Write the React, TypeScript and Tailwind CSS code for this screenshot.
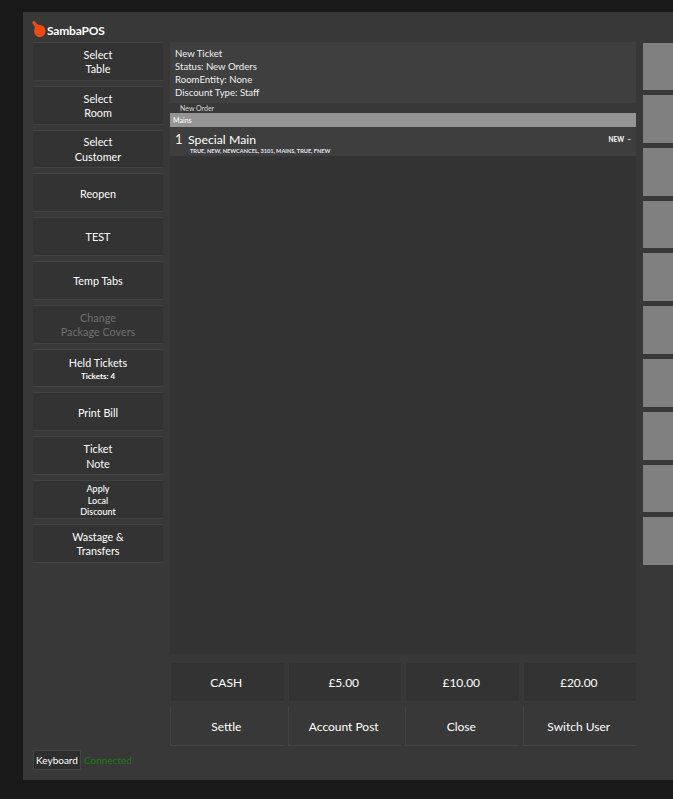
const font = { fontFamily: 'Lato, "Open Sans", sans-serif' };

const sideButtons = [
  { lines: ['Select', 'Table'] },
  { lines: ['Select', 'Room'] },
  { lines: ['Select', 'Customer'] },
  { lines: ['Reopen'] },
  { lines: ['TEST'] },
  { lines: ['Temp Tabs'] },
  { lines: ['Change', 'Package Covers'], disabled: true },
  { lines: ['Held Tickets'], sub: 'Tickets: 4' },
  { lines: ['Print Bill'] },
  { lines: ['Ticket', 'Note'] },
  { lines: ['Apply', 'Local', 'Discount'], small: true },
  { lines: ['Wastage &', 'Transfers'] },
];

const tiles = [47, 48, 48, 47, 48, 48, 48, 48, 47, 48];

function SideButton({ b }: { b: (typeof sideButtons)[number] }) {
  return (
    <div className="h-[38.8px] mb-[5px] pt-[2px] flex flex-col items-center justify-center bg-[#333333] border-t border-b border-[#424242] shrink-0">
      {b.lines.map((l) => (
        <div
          key={l}
          className={
            b.small
              ? 'text-[9px] leading-[11.5px] font-medium text-white'
              : b.disabled
                ? 'text-[10.8px] leading-[14.5px] text-[#707070]'
                : 'text-[10.8px] leading-[14.5px] text-white'
          }
        >
          {l}
        </div>
      ))}
      {b.sub && <div className="text-[8px] leading-[12px] font-bold text-white">{b.sub}</div>}
    </div>
  );
}

export default function App() {
  return (
    <div className="w-[673px] h-[799px] overflow-hidden bg-[#191919] pl-[23px] pt-[12px]" style={font}>
      <div className="w-[650px] h-[768px] bg-[#383838] flex flex-col pl-[10px]">
        {/* Logo */}
        <div className="h-[30px] flex items-center gap-[1px] pt-[7px]">
          <svg width="14" height="16" viewBox="0 0 14 16" className="-mt-[3px] -ml-[1px]">
            <path d="M0 1 L2 0 L4 1.5 L5 3 L7 4 C10.5 3.8 13.5 6.5 13.5 10 C13.5 13.3 11 16 8 16 C4.5 16 2.2 13.3 2.2 10.2 C2.2 8.5 3 7.3 2.8 6 C2.6 4.5 1 3.5 0 1 Z" fill="#f04a13" />
          </svg>
          <span className="text-[12px] font-bold text-white tracking-[-0.2px]">SambaPOS</span>
        </div>

        <div className="flex flex-1">
          {/* Left buttons */}
          <div className="w-[130px] flex flex-col shrink-0">
            {sideButtons.map((b) => (
              <SideButton key={b.lines.join(' ')} b={b} />
            ))}
            <div className="flex-1" />
            <div className="flex items-center gap-[3px] mb-[10px]">
              <div className="w-[48px] h-[20px] flex items-center justify-center bg-[#2e2e2e] border border-[#444444] text-[10px] text-white">
                Keyboard
              </div>
              <span className="text-[10px] text-[#1c7a12]">Connected</span>
            </div>
          </div>

          {/* Ticket */}
          <div className="w-[466px] ml-[7px] flex flex-col shrink-0">
            <div className="h-[61px] bg-[#3f3f3f] pl-[5px] pt-[5px] text-[9.6px] leading-[13px] text-[#f0f0f0]">
              <div>New Ticket</div>
              <div>Status: New Orders</div>
              <div>RoomEntity: None</div>
              <div>Discount Type: Staff</div>
            </div>
            <div className="h-[10px] pl-[10px] text-[7px] leading-[11px] text-[#d8d8d8]">New Order</div>
            <div className="h-[14px] bg-[#949494] pl-[3px] text-[7px] leading-[14px] font-medium text-white">Mains</div>
            <div className="h-[29px] bg-[#3e3e3e] flex items-start justify-between pl-[5px] pr-[5px]">
              <div className="flex">
                <span className="text-[13px] leading-[25px] text-[#fff8e0] w-[13px]">1</span>
                <div>
                  <div className="text-[12.3px] leading-[15px] pt-[4.5px] text-white">Special Main</div>
                  <div className="text-[5.6px] leading-[6px] mt-[1px] pl-[2px] font-bold text-[#e4e4f0]">
                    TRUE, NEW, NEWCANCEL, 3101, MAINS, TRUE, FNEW
                  </div>
                </div>
              </div>
              <span className="text-[6.5px] leading-[26px] font-bold text-white">NEW &nbsp;–</span>
            </div>
            <div className="h-[498px] bg-[#333333]" />

            {/* Payment buttons */}
            <div className="grid grid-cols-4 gap-x-[4px] mt-[9px]">
              {['CASH', '£5.00', '£10.00', '£20.00'].map((t) => (
                <div key={t} className="h-[39px] pt-[1px] flex items-center justify-center bg-[#333333] border-l border-b border-[#3b3b3b] text-[12px] text-white pr-[2px]">
                  {t}
                </div>
              ))}
            </div>
            <div className="grid grid-cols-4 gap-x-[4px] mt-[5px]">
              {['Settle', 'Account Post', 'Close', 'Switch User'].map((t) => (
                <div key={t} className="h-[39px] pt-[1px] flex items-center justify-center bg-[#383838] border-l border-b border-[#444444] text-[12px] text-white pr-[2px]">
                  {t}
                </div>
              ))}
            </div>
          </div>

          {/* Right tiles */}
          <div className="ml-[7px] w-[30px] flex flex-col gap-[5px] shrink-0 pt-[1px]">
            {tiles.map((h, i) => (
              <div key={i} className="bg-[#808080] shrink-0" style={{ height: h }} />
            ))}
          </div>
        </div>
      </div>
    </div>
  );
}
